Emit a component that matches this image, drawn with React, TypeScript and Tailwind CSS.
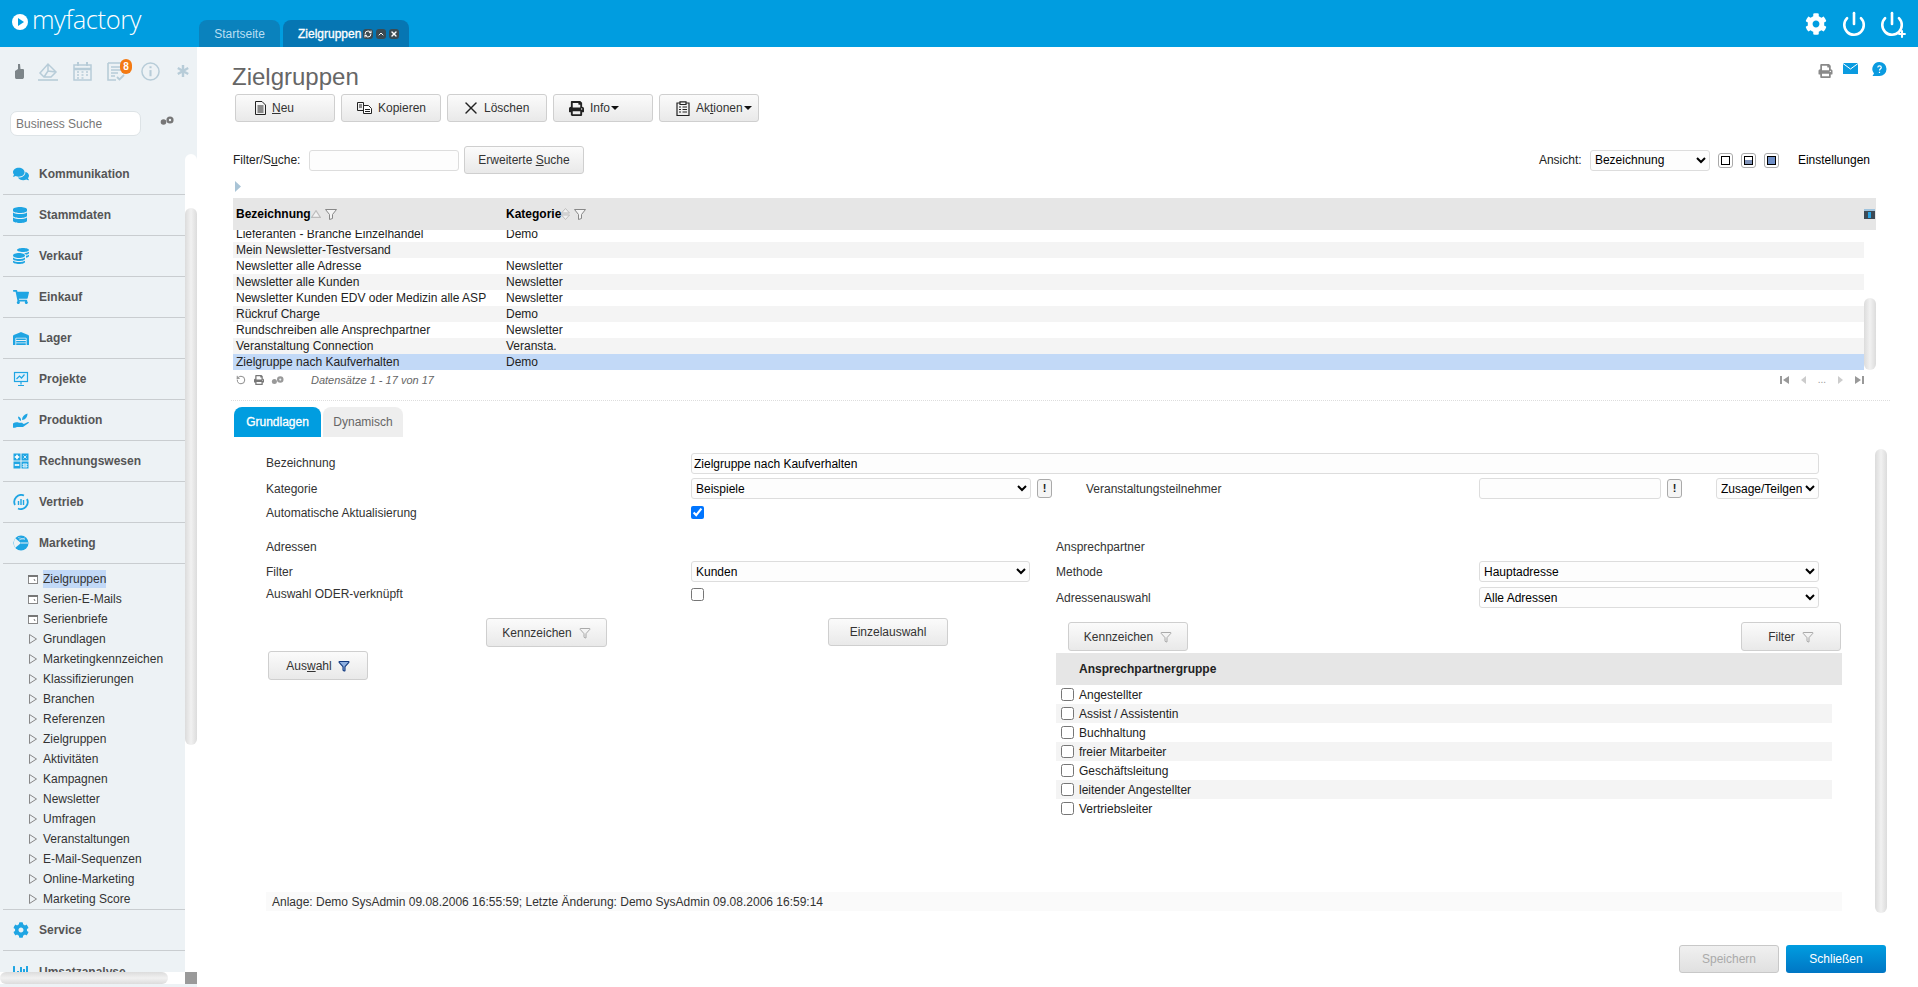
import { ReactNode } from 'react'
import { X, Filter, Power, Plus, RotateCcw, RefreshCw, ChevronUp } from 'lucide-react'
import { FaComments, FaDatabase, FaCoins, FaShoppingCart, FaWarehouse, FaCog, FaChartBar, FaPrint } from 'react-icons/fa'

const Gears = ({ className }: { className?: string }) => (
  <svg viewBox="0 0 15 10" className={className} fill="currentColor">
    <circle cx="3.5" cy="6" r="2.8" />
    <circle cx="10" cy="4" r="3.6" />
    <circle cx="10" cy="4" r="1.2" fill="#edf2f5" />
  </svg>
)

const Monitor = () => (
  <svg viewBox="0 0 16 16" className="w-[16px] h-[16px]" fill="none" stroke="#1fa5e3" strokeWidth="1.2">
    <rect x="1.5" y="1.5" width="13" height="9" fill="#dff1fb" />
    <path d="M3.5 8l3-3 2 2 3-3.5M8 10.5v3M5 14.5h6" />
  </svg>
)

const Plant = () => (
  <svg viewBox="0 0 16 16" className="w-[16px] h-[16px]" fill="#1fa5e3">
    <path d="M0 11.5c2-1.5 4-1.5 6-.8h3c1 0 1 1.4 0 1.4H7l4.500-.4 3.500-1.700c.8-.3 1.200.6.600 1.100L10 15H4l-2 .8H0z" />
    <path d="M8 9C6 8.500 5 6.500 5 4.500 7 5 8.500 6.500 8 9zM9 8c0-3 2-5.500 5.500-6.500C14.500 5 12.500 8 9 8z" />
  </svg>
)

const Calc = () => (
  <svg viewBox="0 0 16 16" className="w-[16px] h-[16px]" fill="#1fa5e3">
    <rect x="0.500" y="0.500" width="7" height="7" />
    <rect x="8.500" y="0.500" width="7" height="7" />
    <rect x="0.500" y="8.500" width="7" height="7" />
    <rect x="8.500" y="8.500" width="7" height="7" />
    <path d="M2 3.500h4v1H2zM3.500 2h1v4h-1zM2 11.500h4v1H2zM10 11h4v1h-4zM10 13h4v1h-4zM10.500 2.500l3 3M13.500 2.500l-3 3" stroke="#fff" strokeWidth="0.800" />
  </svg>
)

const Cycle = () => (
  <svg viewBox="0 0 16 16" className="w-[16px] h-[16px]" fill="none" stroke="#1fa5e3">
    <path d="M2 11A7 7 0 0 1 11 1.500M14 5a7 7 0 0 1-9 9.500" strokeWidth="1.800" />
    <path d="M5.500 7v4M8 5v6M10.500 6v5" strokeWidth="1.400" />
  </svg>
)

const Wheel = () => (
  <svg viewBox="0 0 16 16" className="w-[16px] h-[16px]" fill="#1fa5e3">
    <circle cx="8" cy="8" r="7.500" />
    <path d="M2 3l6 5-6 5c-1.500-3-1.500-7 0-10z" fill="#edf2f5" />
    <path d="M8 8l7 0" stroke="#edf2f5" />
    <path d="M5 2.500l7 2M6 5l6-2" stroke="#edf2f5" strokeWidth="0.600" />
  </svg>
)

const menuTop: { label: string; icon: ReactNode }[] = [
  { label: 'Kommunikation', icon: <FaComments className="w-[16px] h-[16px] text-[#1fa5e3]" /> },
  { label: 'Stammdaten', icon: <FaDatabase className="w-[14px] h-[16px] text-[#1fa5e3]" /> },
  { label: 'Verkauf', icon: <FaCoins className="w-[16px] h-[16px] text-[#1fa5e3]" /> },
  { label: 'Einkauf', icon: <FaShoppingCart className="w-[16px] h-[16px] text-[#1fa5e3]" /> },
  { label: 'Lager', icon: <FaWarehouse className="w-[16px] h-[15px] text-[#1fa5e3]" /> },
  { label: 'Projekte', icon: <Monitor /> },
  { label: 'Produktion', icon: <Plant /> },
  { label: 'Rechnungswesen', icon: <Calc /> },
  { label: 'Vertrieb', icon: <Cycle /> },
  { label: 'Marketing', icon: <Wheel /> },
]

const subPages = ['Zielgruppen', 'Serien-E-Mails', 'Serienbriefe']
const subFolders = ['Grundlagen', 'Marketingkennzeichen', 'Klassifizierungen', 'Branchen', 'Referenzen', 'Zielgruppen', 'Aktivitäten', 'Kampagnen', 'Newsletter', 'Umfragen', 'Veranstaltungen', 'E-Mail-Sequenzen', 'Online-Marketing', 'Marketing Score']

const rows = [
  { name: 'Lieferanten - Branche Einzelhandel', cat: 'Demo' },
  { name: 'Mein Newsletter-Testversand', cat: '' },
  { name: 'Newsletter alle Adresse', cat: 'Newsletter' },
  { name: 'Newsletter alle Kunden', cat: 'Newsletter' },
  { name: 'Newsletter Kunden EDV oder Medizin alle ASP', cat: 'Newsletter' },
  { name: 'Rückruf Charge', cat: 'Demo' },
  { name: 'Rundschreiben alle Ansprechpartner', cat: 'Newsletter' },
  { name: 'Veranstaltung Connection', cat: 'Veransta.' },
  { name: 'Zielgruppe nach Kaufverhalten', cat: 'Demo' },
]

const groups = ['Angestellter', 'Assist / Assistentin', 'Buchhaltung', 'freier Mitarbeiter', 'Geschäftsleitung', 'leitender Angestellter', 'Vertriebsleiter']

const Btn = ({ children, className = '' }: { children: ReactNode; className?: string }) => (
  <button className={`flex items-center justify-center gap-[5px] w-[100px] h-[28px] rounded-[3px] border border-[#cfcfcf] bg-gradient-to-b from-[#fbfbfb] to-[#e9e9e9] text-[12px] text-[#333] shrink-0 ${className}`}>
    {children}
  </button>
)

// toolbar button: the label always starts 37px in, the icon sits in front of it
const ToolBtn = ({ icon, children }: { icon: ReactNode; children: ReactNode }) => (
  <button className="flex items-center w-[100px] h-[28px] rounded-[3px] border border-[#cfcfcf] bg-gradient-to-b from-[#fbfbfb] to-[#e9e9e9] text-[12px] text-[#333] shrink-0">
    <span className="w-[36px] pr-[6px] flex justify-end shrink-0">{icon}</span>
    {children}
  </button>
)

const Caret = () => (
  <svg viewBox="0 0 8 4" className="w-[8px] h-[4px] ml-[1px]"><path d="M0 0h8L4 4z" fill="#111" /></svg>
)

const Bang = () => (
  <button className="w-[15px] h-[19px] rounded-[3px] border border-[#aaa] bg-[#f5f5f5] text-[11px] font-bold leading-none text-[#222] shrink-0">!</button>
)

const fieldCls = 'h-[21px] rounded-[3px] border border-[#ddd] bg-[#fdfdfd] text-[12px] text-black shrink-0'

const Field = ({ value, className = '' }: { value: string; className?: string }) => (
  <input readOnly value={value} className={`${fieldCls} px-[2px] ${className}`} />
)

const Pick = ({ value, className = '' }: { value: string; className?: string }) => (
  <select value={value} onChange={() => {}} className={`${fieldCls} ${className}`}>
    <option>{value}</option>
  </select>
)

const Thumb = ({ className }: { className: string }) => (
  <div className={`absolute w-[12px] rounded-full bg-gradient-to-r from-[#dcdcdc] via-[#f1f1f1] to-[#dcdcdc] ${className}`} />
)

const SortUp = () => (
  <svg viewBox="0 0 9 7" className="w-[10px] h-[8px]"><path d="M4.500 0.500L8.500 6.500H0.500z" fill="#f2f2f2" stroke="#bdbdbd" /></svg>
)

const SortBoth = () => (
  <svg viewBox="0 0 9 12" className="w-[9px] h-[12px]">
    <path d="M4.500 0.500L8.500 5H0.500z" fill="#f2f2f2" stroke="#bdbdbd" />
    <path d="M4.500 11.500L8.500 7H0.500z" fill="#f2f2f2" stroke="#bdbdbd" />
  </svg>
)

const ColFilter = () => (
  <svg viewBox="0 0 12 11" className="w-[12px] h-[11px] ml-[4px]"><path d="M0.500 0.500h11L7.500 5.500v4l-3 1v-5z" fill="#f4f4f4" stroke="#888" /></svg>
)

const SideIcons = () => (
  <div className="h-[48px] flex items-center">
    <svg viewBox="0 0 9 15" className="ml-[15px] w-[9px] h-[15px]" fill="#7d8589">
      <path d="M3 0h2l.500 5H8c1 0 1 1 1 1.500V13c0 1.500-1 2-2 2H2c-1.500 0-2-.500-2-2V7l3-2z" />
    </svg>
    <svg viewBox="0 0 20 19" className="ml-[14px] w-[20px] h-[19px]" fill="none" stroke="#b7ccd8" strokeWidth="1.500">
      <path d="M2 11L10 2l8 8-5 5H6zM10 2v7l8 1M6 15L10 9" />
      <path d="M0 18h20" strokeWidth="1.600" />
    </svg>
    <svg viewBox="0 0 19 19" className="ml-[15px] w-[19px] h-[19px]" fill="none" stroke="#b7ccd8" strokeWidth="1.500">
      <rect x="1" y="3" width="17" height="15" />
      <path d="M1 7h17" strokeWidth="2.500" />
      <path d="M5 0v4M14 0v4" strokeWidth="2" />
      <path d="M4 10h2M8.500 10h2M13 10h2M4 13h2M8.500 13h2M13 13h2M4 16h2M8.500 16h2" strokeWidth="1.600" />
    </svg>
    <span className="relative ml-[15px]">
      <svg viewBox="0 0 18 19" className="w-[18px] h-[19px] block" fill="none" stroke="#b7ccd8" strokeWidth="1.600">
        <path d="M1 1h16v11M1 1v17h8" />
        <path d="M4 5h10M4 8h10M4 11h7M4 14h4" />
        <path d="M10 15l2.500 2.500L17 13" strokeWidth="1.800" />
      </svg>
      <span className="absolute right-[-7px] top-[-3px] w-[12px] h-[15px] rounded-full bg-[#f47a13] text-white text-[10px] font-bold flex items-center justify-center">8</span>
    </span>
    <svg viewBox="0 0 20 20" className="ml-[16px] w-[19px] h-[19px]" fill="none" stroke="#b7ccd8" strokeWidth="1.600">
      <circle cx="10" cy="10" r="9" />
      <path d="M10 8.500v6.500" strokeWidth="2.200" />
      <path d="M10 4.500v2" strokeWidth="2.200" />
    </svg>
    <svg viewBox="0 0 12 12" className="ml-[17px] w-[12px] h-[12px]" stroke="#b7ccd8" strokeWidth="2.400">
      <path d="M6 0v12M.8 3l10.400 6M.8 9l10.400-6" />
    </svg>
  </div>
)

export default function App() {
  return (
    <div className="h-screen w-full flex flex-col overflow-hidden bg-white text-[12px] text-[#222] font-['Liberation_Sans',Arial,sans-serif]">
      <header className="h-[47px] bg-[#009de0] flex items-end shrink-0">
        <div className="w-[199px] h-[47px] shrink-0 flex items-center pl-[12px] gap-[4px] text-white">
          <svg viewBox="0 0 16 16" className="w-[16px] h-[16px] mt-[-4px]">
            <circle cx="8" cy="8" r="8" fill="#fff" />
            <path d="M6 4l6 4-6 4z" fill="#009de0" />
          </svg>
          <span className="text-[25.5px] leading-none font-['Open_Sans','Liberation_Sans',sans-serif] font-light mt-[-8px] tracking-[-0.4px]">myfactory</span>
        </div>
        <div className="w-[81px] h-[27px] rounded-t-[8px] bg-[#0a82bd] text-[#b9dff2] flex items-center justify-center">Startseite</div>
        <div className="w-[126px] h-[27px] ml-[3px] rounded-t-[8px] bg-[#0676b3] text-white flex items-center pl-[15px] font-bold">
          <span className="font-normal [-webkit-text-stroke:0.3px_white]">Zielgruppen</span>
          <span className="flex gap-[3px] ml-[2px]">
            <span className="w-[10px] h-[10px] rounded-[3px] bg-[#3b4a52] flex items-center justify-center"><RefreshCw className="w-[8px] h-[8px]" strokeWidth={3} /></span>
            <span className="w-[10px] h-[10px] rounded-[3px] bg-[#3b4a52] flex items-center justify-center"><ChevronUp className="w-[8px] h-[8px]" strokeWidth={3} /></span>
            <span className="w-[10px] h-[10px] rounded-[3px] bg-[#3b4a52] flex items-center justify-center"><X className="w-[8px] h-[8px]" strokeWidth={4} /></span>
          </span>
        </div>
        <div className="ml-auto h-[47px] flex items-center pr-[13px] text-white">
          <FaCog className="w-[22px] h-[22px]" />
          <Power className="ml-[14px] w-[26px] h-[26px]" strokeWidth={2.400} />
          <span className="relative ml-[12px] w-[26px] h-[26px]">
            <Power className="w-[26px] h-[26px]" strokeWidth={2.400} />
            <Plus className="absolute right-[-2px] bottom-[-2px] w-[10px] h-[10px]" strokeWidth={5} />
          </span>
        </div>
      </header>

      <div className="flex-1 flex min-h-0">
        <aside className="relative w-[197px] shrink-0 bg-[#edf2f5] overflow-hidden">
          <SideIcons />
          <div className="mt-[16px] pl-[10px] flex items-start gap-[19px]">
            <input readOnly placeholder="Business Suche" className="w-[131px] h-[25px] rounded-[7px] border border-[#dde3e6] bg-white px-[5px] text-[12px] placeholder:text-[#777]" />
            <Gears className="w-[15px] h-[10px] mt-[5px] text-[#777]" />
          </div>
          <nav className="mt-[18px] w-[185px] pl-[3px]">
            {menuTop.map((m) => (
              <div key={m.label} className="h-[41px] border-b border-[#c9cdd0] flex items-center">
                <span className="w-[36px] pl-[10px] flex justify-start shrink-0">{m.icon}</span>
                <span className="font-bold text-[#555]">{m.label}</span>
              </div>
            ))}
            <div className="pt-[5px] border-b border-[#c9cdd0]">
              {subPages.map((s, i) => (
                <div key={s} className="h-[20px] flex items-center pl-[25px] text-[#333]">
                  <svg viewBox="0 0 10 9" className="w-[10px] h-[9px] mr-[5px] shrink-0">
                    <rect x="0.500" y="0.500" width="9" height="8" fill="#fff" stroke="#888" />
                    <rect x="0" y="0" width="10" height="2" fill="#777" />
                    <path d="M6 4l1 2" stroke="#777" />
                  </svg>
                  <span className={i === 0 ? 'bg-[#c2d9f7]' : ''}>{s}</span>
                </div>
              ))}
              {subFolders.map((s) => (
                <div key={s} className="h-[20px] flex items-center pl-[26px] text-[#333]">
                  <svg viewBox="0 0 8 10" className="w-[8px] h-[10px] mr-[6px] shrink-0"><path d="M0.500 0.500L7.500 5L0.500 9.500z" fill="none" stroke="#888" /></svg>
                  {s}
                </div>
              ))}
            </div>
            <div className="h-[41px] border-b border-[#c9cdd0] flex items-center">
              <span className="w-[36px] pl-[10px] shrink-0"><FaCog className="w-[16px] h-[16px] text-[#1fa5e3]" /></span>
              <span className="font-bold text-[#555]">Service</span>
            </div>
            <div className="h-[41px] flex items-center">
              <span className="w-[36px] pl-[10px] shrink-0"><FaChartBar className="w-[16px] h-[16px] text-[#1fa5e3]" /></span>
              <span className="font-bold text-[#555]">Umsatzanalyse</span>
            </div>
          </nav>
          {/* scrollbars */}
          <div className="absolute left-[185px] top-[107px] bottom-[15px] w-[12px] bg-white rounded-t-full" />
          <Thumb className="left-[185px] top-[161px] h-[537px]" />
          <div className="absolute left-0 bottom-[3px] h-[12px] w-[185px] bg-white" />
          <div className="absolute left-0 bottom-[3px] h-[12px] w-[168px] rounded-full bg-gradient-to-b from-[#dcdcdc] via-[#f1f1f1] to-[#dcdcdc]" />
          <div className="absolute left-[185px] bottom-[3px] h-[12px] w-[12px] bg-[#9a9a9a]" />
        </aside>

        <main className="relative flex-1 min-w-0 ml-[2px]">
          <div className="pt-[16px] h-[47px] flex justify-between pl-[33px] pr-[31px]">
            <h1 className="text-[24px] leading-[28px] text-[#666]">Zielgruppen</h1>
            <div className="flex items-start">
              <FaPrint className="w-[15px] h-[14px] text-[#8a8a8a] mt-[1px]" />
              <svg viewBox="0 0 15 11" className="ml-[10px] w-[15px] h-[11px]">
                <path d="M0 0h15v11H0z" fill="#0a9be0" />
                <path d="M0 0.500l7.500 5.500L15 0.500" fill="none" stroke="#fff" />
              </svg>
              <svg viewBox="0 0 15 15" className="ml-[14px] mt-[-1px] w-[15px] h-[15px]">
                <path d="M7.500 0a7 7 0 0 1 0 14H0.500l1.500-2.500A7 7 0 0 1 7.500 0z" fill="#0a9be0" />
                <path d="M5.800 5.500c0-2.200 3.500-2.200 3.500 0 0 1.300-1.800 1.300-1.800 3M7.500 9.700v1.300" fill="none" stroke="#fff" strokeWidth="1.200" />
              </svg>
            </div>
          </div>

          <div className="flex gap-[6px] pl-[36px]">
            <ToolBtn icon={
              <svg viewBox="0 0 11 14" className="w-[11px] h-[14px]" fill="none" stroke="#222">
                <path d="M.5.500h6.500l3.500 3.500v9.500H.5zM2.500 5h6M2.500 7h6M2.500 9h6M2.500 11h6" />
              </svg>
            }><span><u>N</u>eu</span></ToolBtn>
            <ToolBtn icon={
              <svg viewBox="0 0 15 12" className="w-[15px] h-[12px]" fill="none" stroke="#222">
                <path d="M.5.500h6v8h-6zM2 3h3M2 5h3" />
                <path d="M6.500 3.500h5l3 3v5h-8zM8 7.500h5M8 9.500h5" fill="#fff" />
              </svg>
            }><span>Kopieren</span></ToolBtn>
            <ToolBtn icon={<X className="w-[20px] h-[20px] text-[#222] mr-[-3px]" strokeWidth={1.700} />}><span>Löschen</span></ToolBtn>
            <ToolBtn icon={<FaPrint className="w-[15px] h-[15px] text-[#222]" />}><span>Info</span><Caret /></ToolBtn>
            <ToolBtn icon={
              <svg viewBox="0 0 14 15" className="w-[14px] h-[15px]" fill="none" stroke="#222" strokeWidth="1.200">
                <path d="M4 2H1v12.500h12V2h-3" />
                <path d="M4 .8h6v2.700H4zM3 6h2M3 8.500h2M3 11h2M6.500 6h4.500M6.500 8.500h4.500M6.500 11h4.500" />
              </svg>
            }><span>Ak<u>t</u>ionen</span><Caret /></ToolBtn>
          </div>

          <div className="mt-[24px] h-[28px] flex items-center pl-[34px] pr-[48px]">
            <span className="w-[76px]">Filter/S<u>u</u>che:</span>
            <input readOnly className="w-[150px] h-[21px] rounded-[3px] border border-[#ddd] bg-[#fdfdfd]" />
            <Btn className="ml-[5px] !w-[120px]"><span>Erweiterte <u>S</u>uche</span></Btn>
            <span className="ml-auto w-[51px]">Ansicht:</span>
            <Pick value="Bezeichnung" className="w-[120px]" />
            <span className="ml-[8px] flex gap-[8px]">
              <span className="w-[15px] h-[15px] rounded-[3px] border border-[#aaa] flex items-center justify-center"><span className="w-[9px] h-[9px] border border-black bg-white" /></span>
              <span className="w-[15px] h-[15px] rounded-[3px] border border-[#aaa] flex items-center justify-center"><span className="w-[9px] h-[9px] border border-black bg-gradient-to-b from-white from-50% to-[#7f92b8] to-50%" /></span>
              <span className="w-[15px] h-[15px] rounded-[3px] border border-[#aaa] flex items-center justify-center"><span className="w-[9px] h-[9px] border border-black bg-[#6f8fc7]" /></span>
            </span>
            <span className="ml-[19px] text-black">Einstellungen</span>
          </div>

          <svg viewBox="0 0 6 11" className="mt-[7px] ml-[36px] w-[6px] h-[11px]"><path d="M0 0l6 5.500L0 11z" fill="#a9c4d6" /></svg>

          <section className="relative mt-[6px] ml-[34px] mr-[42px]">
            <div className="h-[32px] bg-[#e6e6e6] flex items-center font-bold text-black">
              <span className="w-[273px] pl-[3px] flex items-center">Bezeichnung<SortUp /><ColFilter /></span>
              <span className="flex items-center">Kategorie<SortBoth /><ColFilter /></span>
              <span className="ml-auto mr-[1px] w-[11px] h-[10px] bg-[#3d4a55] border-t-2 border-[#9fc3dd] flex items-center justify-center"><span className="w-[3px] h-[6px] bg-[#29a3e3]" /></span>
            </div>
            <div className="h-[140px] overflow-hidden mr-[12px]">
              <div className="mt-[-4px]">
                {rows.map((r, i) => (
                  <div key={r.name} className={`h-[16px] flex items-center leading-none text-[#222] ${i === rows.length - 1 ? 'bg-[#c2d9f7]' : i % 2 === 1 ? 'bg-[#f4f4f4]' : 'bg-white'}`}>
                    <span className="w-[273px] pl-[3px] whitespace-nowrap">{r.name}</span>
                    <span>{r.cat}</span>
                  </div>
                ))}
              </div>
            </div>
            <Thumb className="right-0 top-[100px] h-[72px]" />
            <div className="h-[20px] flex items-center pl-[3px] pr-[12px] text-[#777]">
              <RotateCcw className="w-[10px] h-[10px]" strokeWidth={2} />
              <FaPrint className="ml-[8px] w-[10px] h-[10px]" />
              <Gears className="ml-[7px] w-[14px] h-[9px] text-[#999]" />
              <span className="ml-[26px] text-[11px] italic text-[#666]">Datensätze 1 - 17 von 17</span>
              <span className="ml-auto flex items-center gap-[12px] text-[#999]">
                <svg viewBox="0 0 9 8" className="w-[9px] h-[8px]" fill="currentColor"><path d="M0 0h2v8H0zM9 0v8L3 4z" /></svg>
                <svg viewBox="0 0 5 8" className="w-[5px] h-[8px]" fill="#ccc"><path d="M5 0v8L0 4z" /></svg>
                <span className="text-[10px] leading-none">...</span>
                <svg viewBox="0 0 5 8" className="w-[5px] h-[8px]" fill="#ccc"><path d="M0 0v8l5-4z" /></svg>
                <svg viewBox="0 0 9 8" className="w-[9px] h-[8px]" fill="currentColor"><path d="M0 0v8l6-4zM7 0h2v8H7z" /></svg>
              </span>
            </div>
          </section>

          <div className="mt-[10px] ml-[32px] mr-[28px] border-t border-dotted border-[#ddd]" />

          <div className="mt-[6px] ml-[35px] flex gap-[2px]">
            <div className="w-[87px] h-[30px] rounded-t-[8px] bg-[#009de0] text-white flex items-center justify-center [-webkit-text-stroke:0.3px_white]">Grundlagen</div>
            <div className="w-[80px] h-[30px] rounded-t-[8px] bg-[#eeeeee] text-[#666] flex items-center justify-center">Dynamisch</div>
          </div>

          <form className="mt-[16px] ml-[67px] text-[#333]">
            <div className="flex items-center h-[21px]">
              <span className="w-[425px] mt-[-2px]">Bezeichnung</span>
              <Field value="Zielgruppe nach Kaufverhalten" className="w-[1128px]" />
            </div>
            <div className="flex items-center h-[21px] mt-[4px]">
              <span className="w-[425px]">Kategorie</span>
              <Pick value="Beispiele" className="w-[340px]" />
              <span className="ml-[6px]"><Bang /></span>
              <span className="ml-[34px] w-[393px]">Veranstaltungsteilnehmer</span>
              <Field value="" className="w-[182px]" />
              <span className="ml-[6px]"><Bang /></span>
              <Pick value="Zusage/Teilgenommen" className="ml-[34px] w-[103px]" />
            </div>
            <div className="flex items-center h-[20px] mt-[4px]">
              <span className="w-[425px]">Automatische Aktualisierung</span>
              <input type="checkbox" readOnly checked className="w-[13px] h-[13px] mt-[-2px]" />
            </div>

            <div className="flex mt-[13px]">
              <div className="w-[790px] shrink-0">
                <div className="h-[20px] flex items-center pt-[2px]">Adressen</div>
                <div className="h-[21px] mt-[5px] flex items-center">
                  <span className="w-[425px]">Filter</span>
                  <Pick value="Kunden" className="w-[339px]" />
                </div>
                <div className="h-[20px] mt-[2px] flex items-center">
                  <span className="w-[425px]">Auswahl ODER-verknüpft</span>
                  <input type="checkbox" readOnly className="w-[13px] h-[13px]" />
                </div>
                <div className="mt-[14px] flex items-start pl-[220px] gap-[221px]">
                  <Btn className="!w-[121px] !h-[29px]">Kennzeichen<Filter className="w-[12px] h-[12px] text-[#777] ml-[2px]" strokeWidth={1.200} /></Btn>
                  <Btn className="!w-[120px]">Einzelauswahl</Btn>
                </div>
                <Btn className="mt-[4px] ml-[2px] !h-[29px]"><span>Aus<u>w</u>ahl</span><Filter className="w-[12px] h-[12px] text-[#123a80] fill-[#8fb0e0] ml-[1px]" strokeWidth={2.200} /></Btn>
              </div>

              <div className="w-[786px] shrink-0">
                <div className="h-[20px] flex items-center pt-[2px]">Ansprechpartner</div>
                <div className="h-[21px] mt-[5px] flex items-center">
                  <span className="w-[423px]">Methode</span>
                  <Pick value="Hauptadresse" className="w-[340px]" />
                </div>
                <div className="h-[21px] mt-[5px] flex items-center">
                  <span className="w-[423px]">Adressenauswahl</span>
                  <Pick value="Alle Adressen" className="w-[340px]" />
                </div>
                <div className="mt-[14px] flex justify-between pl-[12px] pr-[1px]">
                  <Btn className="!w-[120px] !h-[29px]">Kennzeichen<Filter className="w-[12px] h-[12px] text-[#777] ml-[2px]" strokeWidth={1.200} /></Btn>
                  <Btn className="!h-[29px]">Filter<Filter className="w-[12px] h-[12px] text-[#777] ml-[2px]" strokeWidth={1.200} /></Btn>
                </div>
                <div className="mt-[2px] h-[32px] bg-[#e6e6e6] flex items-center pl-[23px] font-bold text-[#222]">Ansprechpartnergruppe</div>
                <div className="mr-[10px]">
                  {groups.map((g, i) => (
                    <div key={g} className={`h-[19px] flex items-center pl-[5px] gap-[5px] text-[#222] ${i % 2 === 1 ? 'bg-[#f4f4f4]' : ''}`}>
                      <input type="checkbox" readOnly className="w-[13px] h-[13px] m-0" />
                      {g}
                    </div>
                  ))}
                </div>
              </div>
            </div>

            <div className="mt-[74px] h-[19px] w-[1576px] bg-[#fafafa] pl-[6px] flex items-center text-[#333]">
              Anlage: Demo SysAdmin 09.08.2006 16:55:59; Letzte Änderung: Demo SysAdmin 09.08.2006 16:59:14
            </div>
          </form>

          <Thumb className="left-[1676px] top-[402px] h-[464px]" />

          <div className="mt-[34px] flex justify-end gap-[7px] pr-[32px]">
            <button className="w-[100px] h-[28px] rounded-[3px] border border-[#c8c8c8] bg-gradient-to-b from-[#f0f0f0] to-[#e0e0e0] text-[#aaa]">Speichern</button>
            <button className="w-[100px] h-[28px] rounded-[3px] bg-gradient-to-b from-[#009de0] to-[#0076c4] text-white">Schließen</button>
          </div>
        </main>
      </div>
    </div>
  )
}
